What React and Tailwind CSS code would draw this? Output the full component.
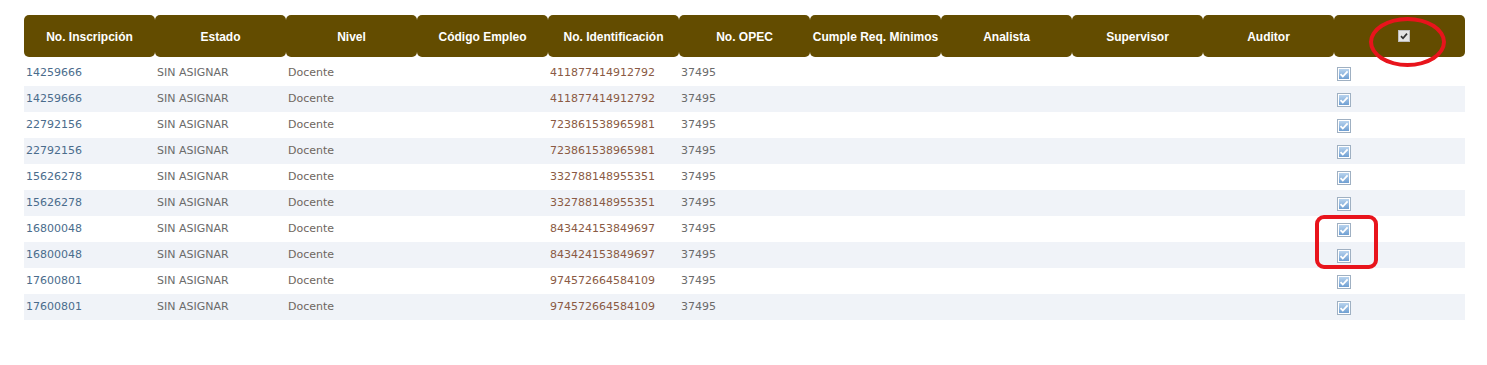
import React from "react";

const columns = [
    "No. Inscripción",
    "Estado",
    "Nivel",
    "Código Empleo",
    "No. Identificación",
    "No. OPEC",
    "Cumple Req. Mínimos",
    "Analista",
    "Supervisor",
    "Auditor",
];

const rows = [
    ["14259666", "411877414912792"],
    ["14259666", "411877414912792"],
    ["22792156", "723861538965981"],
    ["22792156", "723861538965981"],
    ["15626278", "332788148955351"],
    ["15626278", "332788148955351"],
    ["16800048", "843424153849697"],
    ["16800048", "843424153849697"],
    ["17600801", "974572664584109"],
    ["17600801", "974572664584109"],
];

function RowCheck() {
    return (
        <svg width="14" height="14" viewBox="0 0 14 14" className="block">
            <defs>
                <linearGradient id="cb" x1="0" y1="0" x2="0" y2="1">
                    <stop offset="0" stopColor="#b8d3ee"/>
                    <stop offset="1" stopColor="#6f9fd2"/>
                </linearGradient>
            </defs>
            <rect x="0.5" y="0.5" width="13" height="13" fill="#fff" stroke="#9fb0c2"/>
            <rect x="2" y="2" width="10" height="10" fill="url(#cb)"/>
            <path d="M3.5 7.2 L5.8 9.5 L10.6 4.3" fill="none" stroke="#fff" strokeWidth="1.8"/>
        </svg>
    );
}

function HeadCheck() {
    return (
        <svg width="12" height="12" viewBox="0 0 12 12" className="block">
            <rect x="0.5" y="0.5" width="11" height="11" fill="#e4e4e4" stroke="#bdbdbd"/>
            <path d="M3 6.2 L5 8.3 L9 3.6" fill="none" stroke="#333" strokeWidth="1.7"/>
        </svg>
    );
}

export default function App() {
    return (
        <div className="w-[1487px] h-[365px] bg-white pl-[24px] pt-[15px] relative font-['DejaVu_Sans',sans-serif]">
            <div className="w-[1441px]">
                <div className="grid grid-cols-[repeat(11,131px)] h-[42px]">
                    {columns.map((c) => (
                        <div key={c}
                             className="bg-[#634c00] rounded-[5px] flex items-center justify-center pt-[1px] text-white font-bold text-[12px] font-['Liberation_Sans',sans-serif]">
                            {c}
                        </div>
                    ))}
                    <div className="bg-[#634c00] rounded-[5px] flex items-start justify-center pt-[15px] pl-[8px]">
                        <HeadCheck/>
                    </div>
                </div>
                <div className="mt-[3px]">
                    {rows.map((r, i) => (
                        <div key={i}
                             className={"grid grid-cols-[repeat(11,131px)] h-[26px] items-center text-[11px] " + (i % 2 ? "bg-[#f0f3f8]" : "bg-white")}>
                            <div className="pl-[2px] text-[#4a6c8c]">{r[0]}</div>
                            <div className="pl-[2px] text-[#6b6b6b]">SIN ASIGNAR</div>
                            <div className="pl-[2px] text-[#6e6660]">Docente</div>
                            <div></div>
                            <div className="pl-[2px] text-[#8a5a44]">{r[1]}</div>
                            <div className="pl-[2px] text-[#6b6b6b]">37495</div>
                            <div></div>
                            <div></div>
                            <div></div>
                            <div></div>
                            <div className="pl-[3px] pt-[1px]"><RowCheck/></div>
                        </div>
                    ))}
                </div>
            </div>
            <div className="absolute left-[1369px] top-[17px] w-[77px] h-[50px] rounded-[50%] border-[4px] border-[#e8141c]"></div>
            <div className="absolute left-[1315px] top-[215px] w-[63px] h-[54px] rounded-[9px] border-[4px] border-[#e8141c]"></div>
        </div>
    );
}
